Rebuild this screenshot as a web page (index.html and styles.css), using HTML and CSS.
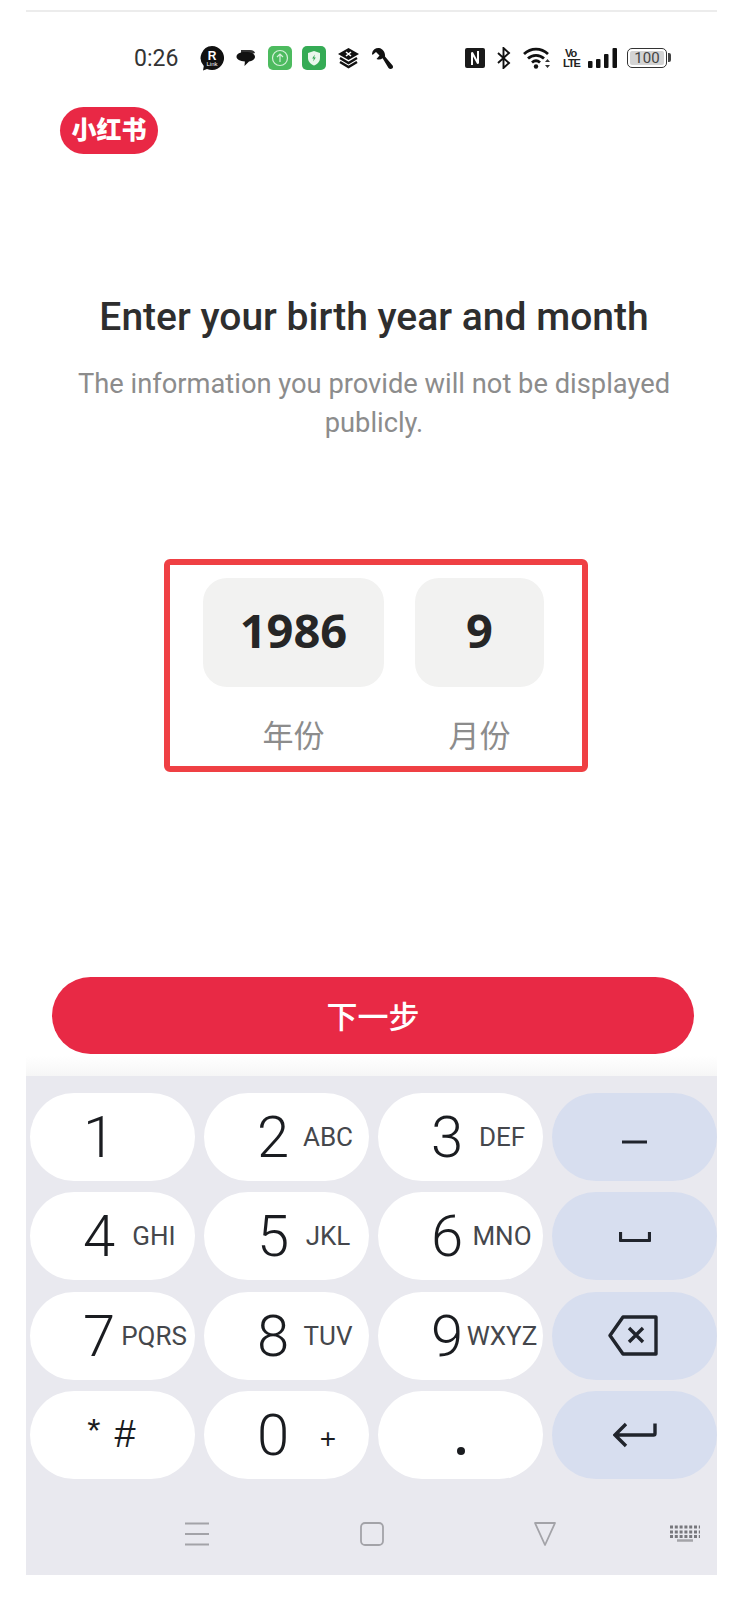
FILE: index.html
```html
<!DOCTYPE html>
<html lang="en">

<head>
    <meta charset="UTF-8">
    <meta name="viewport" content="width=device-width, initial-scale=1.0">
    <title>Birth year and month</title>
    <link rel="stylesheet" href="styles.css">
</head>

<body>
    <div class="screen">
        <div class="topline"></div>

        <div class="status">
            <span class="time">0:26</span>
            <svg class="s-rakuten" width="24" height="25" viewBox="0 0 24 25">
                <path d="M12 0a12 12 0 1 1-5 22.900L3 24.500l.8-4.400A12 12 0 0 1 12 0z" fill="#111" />
                <text x="12" y="13.500" class="tiny-r">R</text>
                <text x="12" y="20" class="tiny-link">Link</text>
            </svg>
            <svg class="s-chat" width="20" height="22" viewBox="0 0 20 22">
                <path d="M5 3h9c3 0 5 1.500 5 3l-3 1H5z" fill="#333" />
                <path d="M9.500 5c5.500 0 9.500 1.900 9.500 4.700 0 2.600-3 4.500-6 4.700L8.500 19l.4-4.600C4 14.200.500 12.300.500 9.700.500 6.900 4 5 9.500 5z" fill="#111" />
            </svg>
            <svg class="s-up" width="24" height="24" viewBox="0 0 24 24">
                <rect width="24" height="24" rx="5" fill="#4dbb5f" />
                <circle cx="12" cy="12" r="7.500" fill="none" stroke="#d5f0da" stroke-width="1.200" />
                <path d="M12 16V8M9 11l3-3 3 3" fill="none" stroke="#d5f0da" stroke-width="1.200" />
            </svg>
            <svg class="s-shield" width="24" height="24" viewBox="0 0 24 24">
                <rect width="24" height="24" rx="5" fill="#35ab55" />
                <path d="M12 5l6 2v5c0 3.500-2.500 6-6 7.500-3.500-1.500-6-4-6-7.500V7z" fill="#eaf7ec" />
                <path d="M12.800 8.500l-2.600 4h1.600l-.6 3 2.600-4h-1.600z" fill="#35ab55" />
            </svg>
            <svg class="s-layers" width="23" height="22" viewBox="0 0 23 22">
                <path d="M11.500 1L22 7l-10.500 6L1 7z" fill="#111" />
                <path d="M9 5l5 4M14 5L9 9" stroke="#fff" stroke-width="1.600" />
                <path d="M3 11l8.500 5 8.500-5M3 15l8.500 5 8.500-5" fill="none" stroke="#111" stroke-width="2.400" />
            </svg>
            <svg class="s-wrench" width="22" height="23" viewBox="0 0 22 23">
                <path d="M8 1a6.500 6.500 0 0 0-7 5.500L1.500 8 5 5l3.500 3.500L5.500 12l1.500.5c1.800.2 3.300-.2 4.600-1.200L17.500 21c1 1.300 3 1.300 4 .2.800-1 .6-2.300-.3-3.200L14 9.500c.5-3.500-2-8-6-8.500z" fill="#111" />
            </svg>

            <svg class="s-nfc" width="20" height="20" viewBox="0 0 20 20">
                <rect width="20" height="20" rx="2" fill="#1a1a1a" />
                <path d="M7 17V4.500l6 11V3" fill="none" stroke="#fff" stroke-width="2" />
            </svg>
            <svg class="s-bt" width="14" height="22" viewBox="0 0 14 22">
                <path d="M1 6l11 10-5.500 5V1L12 6 1 16" fill="none" stroke="#111" stroke-width="1.900" />
            </svg>
            <svg class="s-wifi" width="30" height="22" viewBox="0 0 30 22">
                <path d="M1 7c7-6.500 17-6.500 24 0M5 11.500c4.500-4.200 11.500-4.200 16 0M9 15.500c2.500-2.200 5.500-2.200 8 0" fill="none" stroke="#111" stroke-width="2.800" />
                <circle cx="13" cy="19.500" r="2.200" fill="#111" />
                <path d="M24.500 12l2.500 3h-5zM24.500 21l-2.500-3h5z" fill="#333" />
            </svg>
            <div class="s-volte"><span>Vo</span><span>LTE</span></div>
            <svg class="s-signal" width="29" height="20" viewBox="0 0 29 20">
                <rect x="0" y="13" width="4.500" height="7" rx="1" fill="#111" />
                <rect x="8" y="11" width="4.500" height="9" rx="1" fill="#111" />
                <rect x="16" y="6" width="4.500" height="14" rx="1" fill="#111" />
                <rect x="24.500" y="0" width="4.500" height="20" rx="1" fill="#111" />
            </svg>
            <div class="battery"><span>100</span></div>
        </div>

        <div class="logo">小红书</div>

        <h1>Enter your birth year and month</h1>
        <p class="sub">The information you provide will not be displayed publicly.</p>

        <div class="picker">
            <div class="field">1986</div>
            <div class="field">9</div>
            <div class="field-label">年份</div>
            <div class="field-label">月份</div>
        </div>

        <button class="next">下一步</button>
        <div class="fade"></div>

        <div class="keyboard">
            <div class="keys">
                <div class="key"><span class="num">1</span></div>
                <div class="key"><span class="num">2</span><span class="abc">ABC</span></div>
                <div class="key"><span class="num">3</span><span class="abc">DEF</span></div>
                <div class="key fn">
                    <svg class="i-dash" width="25" height="10" viewBox="0 0 25 10"><path d="M0 5h25" stroke="#20242c" stroke-width="3" /></svg>
                </div>

                <div class="key"><span class="num">4</span><span class="abc">GHI</span></div>
                <div class="key"><span class="num">5</span><span class="abc">JKL</span></div>
                <div class="key"><span class="num">6</span><span class="abc">MNO</span></div>
                <div class="key fn">
                    <svg width="32" height="11" viewBox="0 0 32 11"><path d="M1.500 1v8.500h29V1" fill="none" stroke="#20242c" stroke-width="3.200" stroke-linejoin="round" /></svg>
                </div>

                <div class="key"><span class="num">7</span><span class="abc">PQRS</span></div>
                <div class="key"><span class="num">8</span><span class="abc">TUV</span></div>
                <div class="key"><span class="num">9</span><span class="abc">WXYZ</span></div>
                <div class="key fn">
                    <svg class="i-back" width="50" height="41" viewBox="0 0 50 41">
                        <path d="M15 2h33v37H15L2 20.500z" fill="none" stroke="#20242c" stroke-width="3.400" stroke-linejoin="round" />
                        <path d="M21 13l14 14M35 13L21 27" stroke="#20242c" stroke-width="3.400" />
                    </svg>
                </div>

                <div class="key wide"><span class="star">*</span><span class="hash">#</span></div>
                <div class="key"><span class="num zero">0</span><span class="plus">+</span></div>
                <div class="key wide"><span class="dot"></span></div>
                <div class="key fn">
                    <svg width="44" height="26" viewBox="0 0 44 26">
                        <path d="M42 1.500v10c0 1-.5 1.500-1.500 1.500H3M13 2L2 13l11 11" fill="none" stroke="#20242c" stroke-width="3.400" />
                    </svg>
                </div>
            </div>

            <div class="navbar">
                <svg class="n-menu" width="24" height="24" viewBox="0 0 24 24">
                    <path d="M0 1.500h24M0 12h24M0 22.500h24" stroke="#a3a3a8" stroke-width="2" />
                </svg>
                <svg class="n-home" width="24" height="24" viewBox="0 0 24 24">
                    <rect x="1" y="1" width="22" height="22" rx="4" fill="none" stroke="#a3a3a8" stroke-width="1.800" />
                </svg>
                <svg class="n-back" width="22" height="24" viewBox="0 0 22 24">
                    <path d="M1 1h20L11 23z" fill="none" stroke="#a3a3a8" stroke-width="1.800" stroke-linejoin="round" />
                </svg>
                <svg class="n-kbd" width="30" height="17" viewBox="0 0 30 17">
                    <path d="M0 2h30M0 7h30M0 11.500h30" stroke="#77777c" stroke-width="3" stroke-dasharray="3 1.800" />
                    <path d="M7 15.500h16" stroke="#a3a3a8" stroke-width="2.500" />
                </svg>
            </div>
        </div>
    </div>
</body>

</html>
```

FILE: styles.css
```css
body {
    margin: 0;
    background: white;
    font-family: Roboto, "Noto Sans CJK SC", sans-serif;
    color: #2d2d2d;
}

.screen {
    width: 691px;
    margin-left: 26px;
    padding-top: 10px;
    padding-bottom: 28px;
}

.topline {
    height: 2px;
    background: #ececec;
}

/* status bar */
.status {
    display: flex;
    align-items: center;
    height: 24px;
    margin-top: 34px;
    padding-left: 108px;
}

.time {
    width: 44px;
    font-size: 23px;
    color: #333;
}

.s-rakuten { margin-left: 22px; }
.s-chat { margin-left: 12px; }
.s-up { margin-left: 12px; }
.s-shield { margin-left: 10px; }
.s-layers { margin-left: 11px; }
.s-wrench { margin-left: 11px; }
.s-nfc { margin-left: 72px; }
.s-bt { margin-left: 12px; }
.s-wifi { margin-left: 12px; }
.s-volte { margin-left: 10px; }
.s-signal { margin-left: 10px; }

.tiny-r {
    font-family: "Liberation Sans", sans-serif;
    font-size: 12px;
    font-weight: bold;
    fill: white;
    text-anchor: middle;
}

.tiny-link {
    font-family: "Liberation Sans", sans-serif;
    font-size: 6px;
    fill: white;
    text-anchor: middle;
}

.s-volte {
    display: flex;
    flex-direction: column;
    width: 15px;
    font-family: "Liberation Sans", sans-serif;
    font-size: 11px;
    font-weight: bold;
    letter-spacing: -1px;
    line-height: 10px;
    text-align: center;
    color: #222;
}

.battery {
    position: relative;
    box-sizing: border-box;
    width: 40px;
    height: 20px;
    margin-left: 10px;
    padding: 2px;
    border: 1.500px solid #333;
    border-radius: 5px;
}

.battery span {
    display: block;
    height: 100%;
    background: #d4d4d4;
    border-radius: 2px;
    font-size: 15px;
    line-height: 14px;
    text-align: center;
    color: #444;
}

.battery::after {
    content: "";
    position: absolute;
    right: -5px;
    top: 4px;
    width: 3px;
    height: 9px;
    background: #444;
    border-radius: 0 2px 2px 0;
}

/* logo and titles */
.logo {
    width: 98px;
    height: 47px;
    margin-top: 37px;
    margin-left: 34px;
    background: #e92845;
    border-radius: 24px;
    font-size: 25px;
    font-weight: 900;
    line-height: 48px;
    text-align: center;
    color: white;
}

h1 {
    margin: 141px 0 0;
    padding-left: 5px;
    font-size: 39px;
    font-weight: 500;
    line-height: 44px;
    text-align: center;
    color: #2e2e2e;
}

.sub {
    width: 620px;
    margin: 26px 0 0 38px;
    font-size: 27.300px;
    line-height: 39px;
    text-align: center;
    color: #8c8c8c;
}

/* year and month */
.picker {
    display: grid;
    grid-template-columns: 181px 129px;
    grid-template-rows: 109px 40px;
    column-gap: 31px;
    row-gap: 30px;
    box-sizing: border-box;
    width: 424px;
    height: 213px;
    margin-top: 116px;
    margin-left: 138px;
    padding: 13px 0 0 33px;
    border: 6px solid #ef4044;
    border-radius: 6px;
}

.field {
    background: #f2f2f1;
    border-radius: 24px;
    font-family: "Open Sans", sans-serif;
    font-size: 47px;
    font-weight: 700;
    line-height: 105px;
    text-align: center;
    color: #262626;
}

.field-label {
    font-size: 31px;
    line-height: 40px;
    text-align: center;
    color: #8c8c8c;
}

.next {
    display: block;
    width: 642px;
    height: 77px;
    margin-top: 205px;
    margin-left: 26px;
    padding: 0 0 2px;
    background: #e82945;
    border: none;
    border-radius: 39px;
    font-family: "Noto Sans CJK SC", sans-serif;
    font-size: 31px;
    font-weight: 500;
    color: white;
}

.fade {
    height: 20px;
    margin-top: 2px;
    background: linear-gradient(#ffffff, #f6f6f6);
}

/* number keyboard */
.keyboard {
    box-sizing: border-box;
    height: 499px;
    padding: 17px 0 0 4px;
    background: #e9e9ef;
}

.keys {
    display: grid;
    grid-template-columns: repeat(4, 165px);
    grid-auto-rows: 88px;
    column-gap: 9px;
    row-gap: 11.300px;
}

.key {
    display: grid;
    grid-template-columns: 44px 66px;
    align-items: center;
    justify-items: center;
    padding-left: 47px;
    background: white;
    border-radius: 44px;
    color: #1a1c20;
}

.num {
    font-size: 58px;
    font-weight: 350;
    line-height: 88px;
}

.abc {
    font-size: 26px;
    color: #45474c;
}

.plus {
    margin-top: 8px;
    font-family: "Liberation Sans", sans-serif;
    font-size: 28px;
}

.key.wide {
    display: flex;
    justify-content: center;
    gap: 14px;
    padding-left: 0;
}

.key.fn {
    display: flex;
    justify-content: center;
    padding-left: 0;
    background: #d7deef;
}

.i-dash {
    margin-top: 10px;
}

.i-back {
    margin-right: 4px;
}

.star {
    font-family: "Liberation Sans", sans-serif;
    font-size: 34px;
    margin-top: -8px;
    margin-left: -2px;
}

.hash {
    font-family: "Liberation Sans", sans-serif;
    font-size: 38px;
}

.dot {
    width: 8px;
    height: 8px;
    margin-top: 32px;
    background: #1a1c20;
    border-radius: 50%;
}

.navbar {
    display: flex;
    align-items: center;
    height: 24px;
    margin-top: 43px;
    padding-left: 155px;
}

.n-home { margin-left: 151px; }
.n-back { margin-left: 150px; }
.n-kbd { margin-left: 114px; }
```
